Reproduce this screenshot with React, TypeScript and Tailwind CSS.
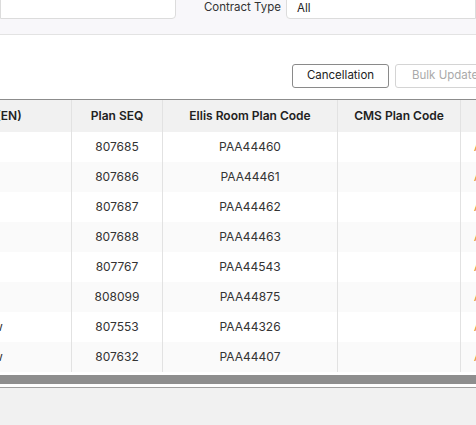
import React from "react";

const rows = [
  { name: "Standard Room", seq: "807685", code: "PAA44460" },
  { name: "Standard Room", seq: "807686", code: "PAA44461" },
  { name: "Standard Room", seq: "807687", code: "PAA44462" },
  { name: "Standard Room", seq: "807688", code: "PAA44463" },
  { name: "Standard Room", seq: "807767", code: "PAA44543" },
  { name: "Standard Room", seq: "808099", code: "PAA44875" },
  { name: "Deluxe Room Sea View", seq: "807553", code: "PAA44326" },
  { name: "Deluxe Room Sea View", seq: "807632", code: "PAA44407" },
];

export default function App() {
  return (
    <div className="w-[476px] h-[425px] overflow-hidden bg-white text-[#333] flex flex-col" style={{ fontFamily: "Inter, 'Noto Sans', sans-serif" }}>
      {/* Filters */}
      <div className="h-[35px] shrink-0 bg-[#f8f7fa] border-b border-[#e3e3e3]">
        <div className="h-[19px] flex items-end">
          <div className="w-[176px] h-[30px] bg-white border border-[#dcdcdc] rounded-br-[4px] shrink-0" />
          <div className="flex-1 flex items-start justify-end h-full pr-[5px]">
            <span className="text-[11.5px] leading-[15px] text-[#333]">Contract Type</span>
          </div>
          <div className="w-[190px] h-[30px] bg-white border border-[#dcdcdc] rounded-bl-[4px] shrink-0 flex items-end pl-[10px] pb-[2px]">
            <span className="text-[11.5px] leading-[15px] text-[#222]">All</span>
          </div>
        </div>
      </div>

      {/* Actions */}
      <div className="h-[64px] shrink-0 flex items-end pb-[11px] pl-[292px] gap-[6px]">
        <button className="w-[97px] h-[24px] shrink-0 border border-[#8a8a8a] rounded-[3px] bg-white text-[11.5px] text-[#222]">Cancellation</button>
        <button className="w-[100px] h-[24px] shrink-0 border border-[#d4d4d4] rounded-[3px] bg-white text-[11.5px] text-[#aaa] text-left pl-[16px]">Bulk Update</button>
      </div>

      {/* Table */}
      <div className="shrink-0 border-t border-[#8c8c8c] ml-[-128px] w-[750px]">
        <div className="flex h-[32px] bg-[#f1f1f1] text-[12px] font-semibold text-[#222]">
          <div className="w-[200px] border-r border-[#e2e2e2] flex items-center justify-center pl-[10px]">Plan Name (EN)</div>
          <div className="w-[91px] border-r border-[#e2e2e2] flex items-center justify-center">Plan SEQ</div>
          <div className="w-[175px] border-r border-[#e2e2e2] flex items-center justify-center">Ellis Room Plan Code</div>
          <div className="w-[123px] border-r border-[#e2e2e2] flex items-center justify-center">CMS Plan Code</div>
          <div className="w-[150px] flex items-center pl-[24px]">Status</div>
        </div>
        {rows.map((r, i) => (
          <div key={r.seq} className={`flex h-[30px] text-[12px] ${i % 2 === 1 ? "bg-[#fafafa]" : "bg-white"}`}>
            <div className="w-[200px] border-r border-[#e2e2e2] flex items-center whitespace-nowrap">{r.name}</div>
            <div className="w-[91px] border-r border-[#e2e2e2] flex items-center justify-center">{r.seq}</div>
            <div className="w-[175px] border-r border-[#e2e2e2] flex items-center justify-center">{r.code}</div>
            <div className="w-[123px] border-r border-[#e2e2e2]" />
            <div className="w-[150px] flex items-center pl-[13px] text-[#e8891c]">Active</div>
          </div>
        ))}
      </div>

      {/* Scrollbar */}
      <div className="shrink-0 mt-[3px] h-[9px] bg-[#8e8e8e]" />
      <div className="shrink-0 h-[3px] bg-white" />
      <div className="shrink-0 border-t border-[#a0a0a0] flex-1 bg-[#f1f1f1]" />
    </div>
  );
}
